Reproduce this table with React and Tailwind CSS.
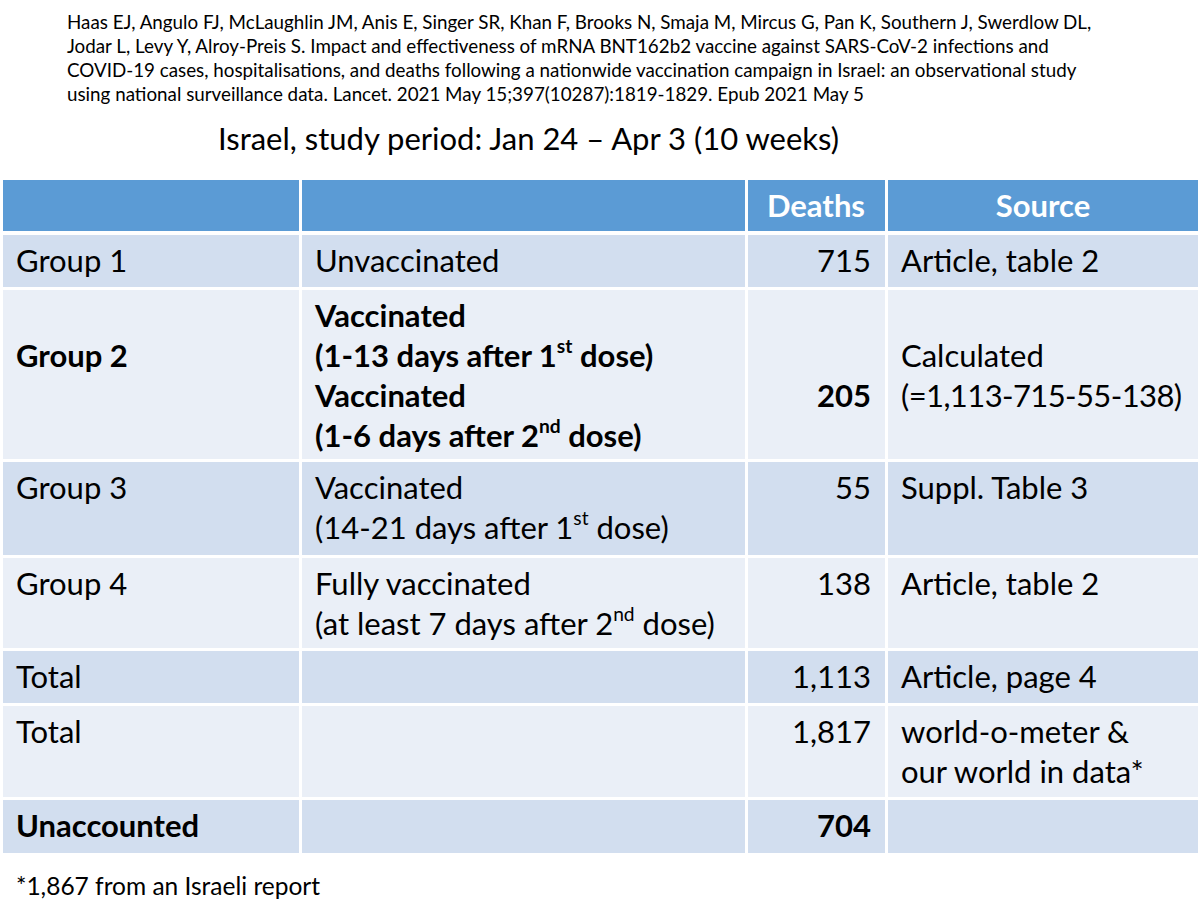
import React from "react";

const font = "font-['Lato','Liberation_Sans',sans-serif]";

function Sup({ children }) {
  return <sup className="text-[0.62em] top-[-0.72em]">{children}</sup>;
}

function Cell({ children, className = "" }) {
  return <div className={`px-[13px] pt-[5px] leading-[40px] whitespace-nowrap ${className}`}>{children}</div>;
}

const cols = "grid grid-cols-[296px_443px_137px_310px] gap-x-[3px]";

function Row({ h, bg, bold, cells }) {
  const b = bold ? "font-bold" : "";
  return (
    <div className={`${cols}`} style={{ height: h }}>
      <Cell className={`${bg} ${cells[4] ? "font-bold" : b}`}>{cells[0]}</Cell>
      <Cell className={`${bg} ${cells[5] ? "font-bold" : b}`}>{cells[1]}</Cell>
      <Cell className={`${bg} ${cells[6] ? "font-bold" : b} text-right pr-[14px]`}>{cells[2]}</Cell>
      <Cell className={`${bg} ${b}`}>{cells[3]}</Cell>
    </div>
  );
}

export default function App() {
  const odd = "bg-[#D2DEEF]";
  const even = "bg-[#EAEFF7]";
  return (
    <div className={`w-[1200px] h-[919px] bg-white text-black ${font}`}>
      <div className="pl-[67px] pt-[10px] text-[18.8px] leading-[24px] whitespace-nowrap">
        Haas EJ, Angulo FJ, McLaughlin JM, Anis E, Singer SR, Khan F, Brooks N, Smaja M, Mircus G, Pan K, Southern J, Swerdlow DL,
        <br />
        Jodar L, Levy Y, Alroy-Preis S. Impact and effectiveness of mRNA BNT162b2 vaccine against SARS-CoV-2 infections and
        <br />
        COVID-19 cases, hospitalisations, and deaths following a nationwide vaccination campaign in Israel: an observational study
        <br />
        using national surveillance data. Lancet. 2021 May 15;397(10287):1819-1829. Epub 2021 May 5
      </div>
      <div className="pl-[218px] mt-[12px] text-[31px] leading-[40px]">
        Israel, study period: Jan 24 – Apr 3 (10 weeks)
      </div>
      <div className="ml-[3px] mt-[22px] flex flex-col text-[31px]">
        <div className={`${cols} h-[51px] mb-[4px]`}>
          <div className="bg-[#5B9BD5]" />
          <div className="bg-[#5B9BD5]" />
          <div className="bg-[#5B9BD5] flex items-center justify-end pr-[20px] font-bold text-white">Deaths</div>
          <div className="bg-[#5B9BD5] flex items-center justify-center font-bold text-white">Source</div>
        </div>
        <div className="flex flex-col gap-y-[3px]">
          <Row h={52} bg={odd} cells={["Group 1", "Unvaccinated", "715", "Article, table 2"]} />
          <Row
            h={169}
            bg={even}
            cells={[
              <>
                <br />
                Group 2
              </>,
              <>
                Vaccinated
                <br />
                (1-13 days after 1<Sup>st</Sup> dose)
                <br />
                Vaccinated
                <br />
                (1-6 days after 2<Sup>nd</Sup> dose)
              </>,
              <>
                <br />
                <br />
                205
              </>,
              <>
                <br />
                Calculated
                <br />
                <span className="tracking-[-0.6px]">(=1,113-715-55-138)</span>
              </>,
              true,
              true,
              true,
            ]}
          />
          <Row
            h={93}
            bg={odd}
            cells={[
              "Group 3",
              <>
                Vaccinated
                <br />
                (14-21 days after 1<Sup>st</Sup> dose)
              </>,
              "55",
              "Suppl. Table 3",
            ]}
          />
          <Row
            h={90}
            bg={even}
            cells={[
              "Group 4",
              <>
                Fully vaccinated
                <br />
                (at least 7 days after 2<Sup>nd</Sup> dose)
              </>,
              "138",
              "Article, table 2",
            ]}
          />
          <Row h={52} bg={odd} cells={["Total", "", "1,113", "Article, page 4"]} />
          <Row
            h={91}
            bg={even}
            cells={[
              "Total",
              "",
              "1,817",
              <>
                world-o-meter &amp;
                <br />
                our world in data*
              </>,
            ]}
          />
          <Row h={53} bg={odd} bold cells={["Unaccounted", "", "704", ""]} />
        </div>
      </div>
      <div className="pl-[16px] mt-[18px] text-[24.5px] leading-[30px]">*1,867 from an Israeli report</div>
    </div>
  );
}
